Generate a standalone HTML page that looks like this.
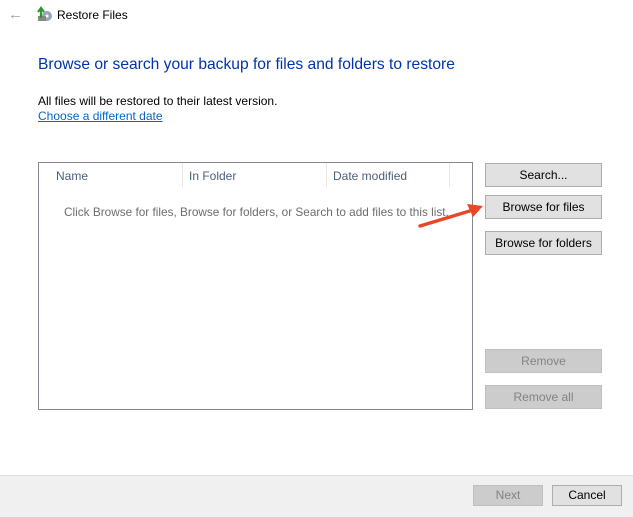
<html><head><style>
body{margin:0;width:633px;height:516px;background:#fff;font-family:"Liberation Sans",sans-serif;font-size:12px;position:relative;overflow:hidden;color:#000}
.a{position:absolute}
.btn{position:absolute;background:#e1e1e1;border:1px solid #adadad;box-sizing:border-box;text-align:center;font-size:12px;line-height:18px}
.dis{background:#cccccc;border-color:#bfbfbf;color:#838383}
</style></head><body>
<div class="a" style="left:8px;top:6px;color:#a0a0a0;font-size:15px">&#8592;</div>
<svg class="a" style="left:36px;top:6px" width="17" height="17" viewBox="0 0 17 17"><circle cx="11" cy="10" r="5" fill="#9aa3b8"/><circle cx="11" cy="10" r="1.5" fill="#fff"/><rect x="2" y="10" width="8" height="5" fill="#888"/><path d="M5 12V3M2 6l3-4 3 4" stroke="#2a9a2a" stroke-width="2.2" fill="none"/></svg>
<div class="a" style="left:57px;top:8px;font-size:12px">Restore Files</div>
<div class="a" style="left:38px;top:56px;font-size:15.6px;color:#0033aa">Browse or search your backup for files and folders to restore</div>
<div class="a" style="left:38px;top:94px">All files will be restored to their latest version.</div>
<div class="a" style="left:38px;top:109px;color:#0066cc;text-decoration:underline">Choose a different date</div>
<div class="a" style="left:38px;top:162px;width:435px;height:248px;border:1px solid #828790;box-sizing:border-box"></div>
<div class="a" style="left:56px;top:169px;color:#4c607a">Name</div>
<div class="a" style="left:182px;top:163px;width:1px;height:24px;background:#e5e5e5"></div>
<div class="a" style="left:189px;top:169px;color:#4c607a">In Folder</div>
<div class="a" style="left:326px;top:163px;width:1px;height:24px;background:#e5e5e5"></div>
<div class="a" style="left:333px;top:169px;color:#4c607a">Date modified</div>
<div class="a" style="left:449px;top:163px;width:1px;height:24px;background:#e5e5e5"></div>
<div class="a" style="left:64px;top:205px;color:#6d6d6d;font-size:11.8px">Click Browse for files, Browse for folders, or Search to add files to this list.</div>
<div class="btn" style="left:485px;top:163px;width:117px;height:24px;line-height:22px">Search...</div>
<div class="btn" style="left:485px;top:195px;width:117px;height:24px;line-height:22px">Browse for files</div>
<div class="btn" style="left:485px;top:231px;width:117px;height:24px;line-height:22px">Browse for folders</div>
<div class="btn dis" style="left:485px;top:349px;width:117px;height:24px;line-height:22px">Remove</div>
<div class="btn dis" style="left:485px;top:385px;width:117px;height:24px;line-height:22px">Remove all</div>
<svg class="a" style="left:415px;top:200px" width="70" height="30"><path d="M5 26L58 10" stroke="#e8472a" stroke-width="3.5" stroke-linecap="round"/><path d="M68 6L52 4L58 17Z" fill="#e8472a"/></svg>
<div class="a" style="left:0;top:475px;width:633px;height:41px;background:#f0f0f0;border-top:1px solid #dfdfdf"></div>
<div class="btn dis" style="left:473px;top:485px;width:70px;height:21px">Next</div>
<div class="btn" style="left:552px;top:485px;width:70px;height:21px">Cancel</div>
</body></html>
